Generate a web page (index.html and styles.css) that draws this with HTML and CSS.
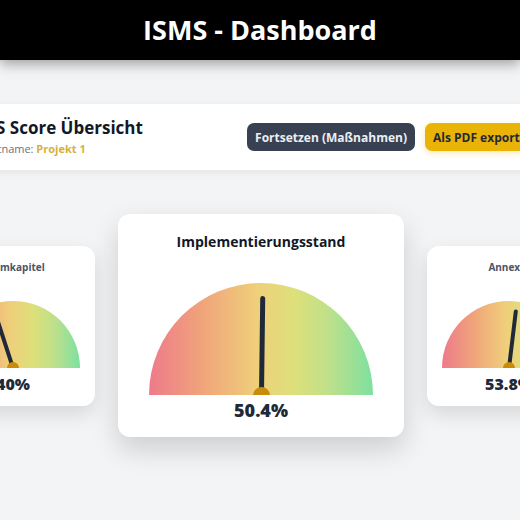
FILE: index.html
```html
<!DOCTYPE html>
<html lang="de">
<head>
<meta charset="utf-8">
<title>ISMS - Dashboard</title>
<link rel="stylesheet" href="styles.css">
</head>
<body>
<header class="topbar">ISMS - Dashboard</header>
<main class="main">
  <section class="summary">
    <div class="summary-text">
      <h1 class="summary-title">ISMS Score Übersicht</h1>
      <div class="summary-sub">Projektname: <span class="project">Projekt 1</span></div>
    </div>
    <div class="actions">
      <button class="btn btn-dark">Fortsetzen (Maßnahmen)</button>
      <button class="btn btn-gold">Als PDF exportieren</button>
    </div>
  </section>
  <section class="gauges">
    <div class="card card-side">
      <div class="card-title-side">Normkapitel</div>
      <div class="gauge gauge-side">
        <div class="needle" style="--p:40"></div>
        <div class="hub"></div>
      </div>
      <div class="value value-side">40%</div>
    </div>
    <div class="card card-main">
      <div class="card-title-main">Implementierungsstand</div>
      <div class="gauge gauge-main">
        <div class="needle" style="--p:50.4"></div>
        <div class="hub"></div>
      </div>
      <div class="value value-main">50.4%</div>
    </div>
    <div class="card card-side">
      <div class="card-title-side">Annex A</div>
      <div class="gauge gauge-side">
        <div class="needle" style="--p:53.8"></div>
        <div class="hub"></div>
      </div>
      <div class="value value-side">53.8%</div>
    </div>
  </section>
</main>
</body>
</html>
```
FILE: styles.css
```css
* { box-sizing: border-box; }
html, body { margin: 0; padding: 0; }
body {
  width: 520px;
  height: 520px;
  overflow: hidden;
  background: #f3f4f6;
  font-family: "Open Sans", "Noto Sans", sans-serif;
  color: #111827;
}
.topbar {
  height: 60px;
  background: #000;
  color: #fff;
  font-weight: 700;
  font-size: 27px;
  display: flex;
  align-items: center;
  justify-content: center;
  padding-bottom: 2px;
  box-shadow: 0 4px 12px rgba(0,0,0,0.35);
  position: relative;
  z-index: 2;
}
.main {
  display: flex;
  flex-direction: column;
  align-items: center;
  padding-top: 44px;
}
.summary {
  flex: 0 0 auto;
  width: 660px;
  height: 66px;
  background: #fff;
  border-radius: 8px;
  box-shadow: 0 2px 8px rgba(0,0,0,0.07);
  display: flex;
  align-items: center;
  justify-content: space-between;
  padding: 0 31px 0 35px;
}
.summary-title {
  margin: 0;
  font-size: 17px;
  font-weight: 700;
  line-height: 22px;
  color: #111827;
}
.summary-sub {
  font-size: 11px;
  line-height: 16px;
  color: #6b7280;
  margin-top: 2px;
}
.project { color: #d6b13e; font-weight: 700; }
.actions { display: flex; gap: 10px; }
.btn {
  font-family: inherit;
  font-size: 12px;
  font-weight: 700;
  border: none;
  border-radius: 7px;
  height: 28px;
  padding: 0 8px;
}
.btn-dark { background: #374151; color: #eceef1; }
.btn-gold { background: #eab308; color: #1f2937; box-shadow: 0 2px 6px rgba(234,179,8,0.3); }

.gauges {
  flex: 0 0 auto;
  width: 660px;
  margin-top: 44px;
  margin-left: 2px;
  display: flex;
  align-items: center;
  justify-content: center;
  gap: 23px;
}
.card {
  background: #fff;
  border-radius: 12px;
  display: flex;
  flex-direction: column;
  align-items: center;
}
.card-side {
  width: 164px;
  height: 160px;
  padding-top: 14px;
  box-shadow: 0 8px 20px rgba(0,0,0,0.12);
}
.card-main {
  width: 286px;
  height: 223px;
  padding-top: 18px;
  box-shadow: 0 12px 28px rgba(0,0,0,0.16);
}
.card-title-side {
  font-size: 10px;
  line-height: 14px;
  font-weight: 700;
  color: #4b5563;
}
.card-title-main {
  font-size: 14px;
  line-height: 20px;
  font-weight: 700;
  color: #111827;
}
.gauge {
  position: relative;
  overflow: hidden;
  background: linear-gradient(to right, #ee7a8a 0%, #f0a67a 25%, #efcf7a 48%, #dde07a 65%, #c0e08a 80%, #7ee0a0 100%);
}
.gauge-main {
  --r: 112px;
  width: 224px;
  height: 112px;
  border-radius: 112px 112px 0 0;
  margin-top: 31px;
}
.gauge-side {
  --r: 67px;
  width: 134px;
  height: 67px;
  border-radius: 67px 67px 0 0;
  margin-top: 27px;
}
.needle {
  position: absolute;
  left: calc(50% - 2.5px);
  bottom: 0;
  width: 5px;
  height: calc(var(--r) * 0.88);
  background: #1f2937;
  border-radius: 3px;
  transform-origin: 50% 100%;
  transform: rotate(calc((var(--p) - 50) * 1.8deg));
}
.hub {
  position: absolute;
  left: calc(50% - 8.5px);
  bottom: -8.5px;
  width: 17px;
  height: 17px;
  border-radius: 50%;
  background: #c98c08;
}
.gauge-side .hub { left: calc(50% - 6px); bottom: -6px; width: 12px; height: 12px; }
.gauge-side .needle { width: 4px; left: calc(50% - 2px); }
.value { font-weight: 800; color: #1f2937; }
.value-main { font-size: 18px; line-height: 24px; margin-top: 3px; }
.value-side { font-size: 16px; line-height: 22px; margin-top: 5px; }
```
